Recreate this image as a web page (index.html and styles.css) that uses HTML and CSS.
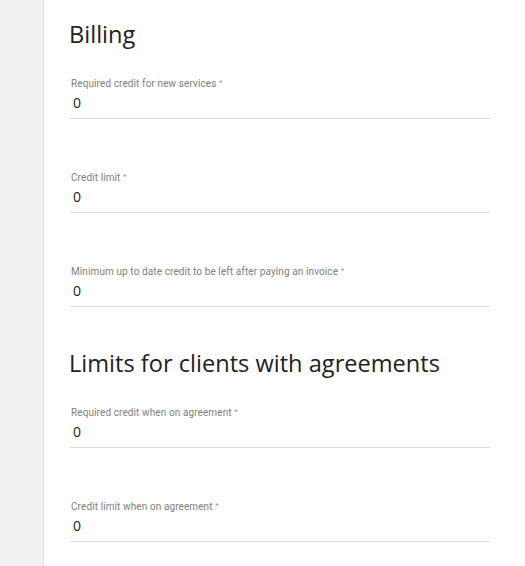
FILE: index.html
```html
<!DOCTYPE html>
<html lang="en">
<head>
    <meta charset="UTF-8">
    <meta name="viewport" content="width=device-width, initial-scale=1.0">
    <title>Billing settings</title>
    <link rel="stylesheet" href="styles.css">
</head>
<body>
    <div class="layout">
        <div class="sidebar"></div>
        <div class="main">
            <h2>Billing</h2>

            <div class="field">
                <label for="req-credit">Required credit for new services <span class="req">*</span></label>
                <input type="text" id="req-credit" value="0">
            </div>

            <div class="field">
                <label for="credit-limit">Credit limit <span class="req">*</span></label>
                <input type="text" id="credit-limit" value="0">
            </div>

            <div class="field">
                <label for="min-credit">Minimum up to date credit to be left after paying an invoice <span class="req">*</span></label>
                <input type="text" id="min-credit" value="0">
            </div>

            <h2>Limits for clients with agreements</h2>

            <div class="field">
                <label for="agr-credit">Required credit when on agreement <span class="req">*</span></label>
                <input type="text" id="agr-credit" value="0">
            </div>

            <div class="field">
                <label for="agr-limit">Credit limit when on agreement <span class="req">*</span></label>
                <input type="text" id="agr-limit" value="0">
            </div>
        </div>
    </div>
</body>
</html>
```

FILE: styles.css
```css
html, body {
    margin: 0;
    padding: 0;
    height: 100%;
}
body {
    font-family: "Open Sans", sans-serif;
    color: #222;
    background: #fff;
    overflow: hidden;
}
.layout {
    display: flex;
    min-height: 100%;
}
.sidebar {
    width: 43px;
    flex-shrink: 0;
    background-color: #f1f1f1;
    border-right: 1px solid #e2e2e2;
}
.main {
    width: 420px;
    padding: 0 0 0 26px;
}
h2 {
    font-size: 23.6px;
    font-weight: 400;
    margin: 19px 0 28px -1px;
    line-height: 30px;
    color: #222;
}
.field {
    margin-bottom: 52px;
}
.field + h2 {
    margin-top: -11px;
}
label {
    display: block;
    font-family: Roboto, sans-serif;
    font-size: 10px;
    letter-spacing: 0.1px;
    color: #808080;
    line-height: 14px;
    padding-left: 1px;
}
.req {
    font-size: 8px;
    color: #999;
    vertical-align: top;
    line-height: 12px;
}
input[type="text"] {
    display: block;
    width: 100%;
    box-sizing: border-box;
    border: none;
    border-bottom: 1px solid #dcdcdc;
    padding: 2px 3px 6px;
    font-family: "Open Sans", sans-serif;
    font-size: 14px;
    line-height: 19px;
    color: #222;
    outline: none;
    background: transparent;
}
```
